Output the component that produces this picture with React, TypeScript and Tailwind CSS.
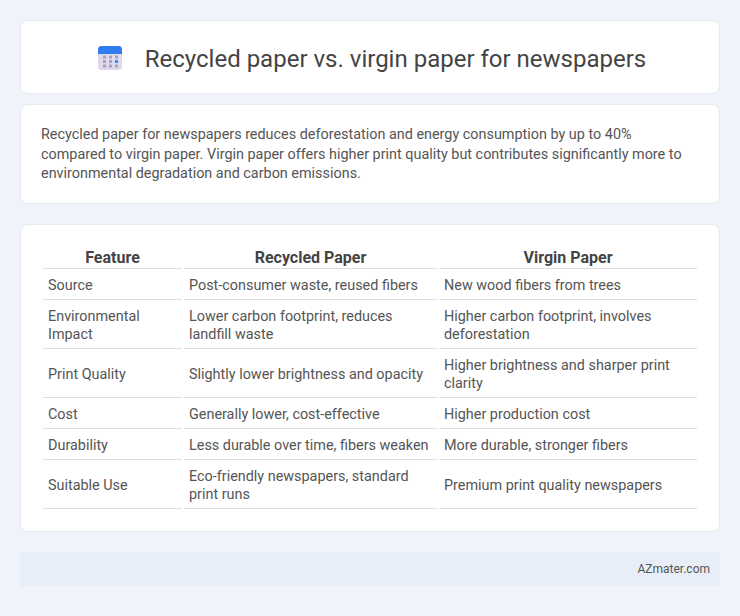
const rows = [
  ['Source', 'Post-consumer waste, reused fibers', 'New wood fibers from trees'],
  ['Environmental Impact', 'Lower carbon footprint, reduces landfill waste', 'Higher carbon footprint, involves deforestation'],
  ['Print Quality', 'Slightly lower brightness and opacity', 'Higher brightness and sharper print clarity'],
  ['Cost', 'Generally lower, cost-effective', 'Higher production cost'],
  ['Durability', 'Less durable over time, fibers weaken', 'More durable, stronger fibers'],
  ['Suitable Use', 'Eco-friendly newspapers, standard print runs', 'Premium print quality newspapers'],
];

function CalendarIcon() {
  return (
    <svg width="24" height="24" viewBox="0 0 24 24" className="mt-[2px] shrink-0">
      <rect x="0" y="0" width="24" height="24" rx="3.5" fill="#e0d8ec" />
      <path d="M0 8V3.500A3.500 3.500 0 0 1 3.500 0h17A3.500 3.500 0 0 1 24 3.500V8Z" fill="#2f7df0" />
      {[5, 11, 17].map((x) =>
        [9.500, 14, 18.500].map((y) => (
          <rect
            key={`${x}-${y}`}
            x={x}
            y={y}
            width="3"
            height="3"
            rx="0.5"
            fill={x === 17 && y === 14 ? '#2f8cf0' : '#a8a2b8'}
          />
        ))
      )}
    </svg>
  );
}

export default function App() {
  return (
    <div className="min-h-[616px] bg-[#f0f3f9] px-5 py-5 font-['Roboto',sans-serif] text-[#444]">
      {/* Title */}
      <div className="flex h-[74px] items-center justify-center rounded-lg border border-[#e6eaf2] bg-white pl-1">
        <CalendarIcon />
        <h1 className="mt-1 ml-[23px] text-2xl leading-8 font-normal">Recycled paper vs. virgin paper for newspapers</h1>
      </div>

      {/* Summary */}
      <div className="mt-[10px] h-[100px] rounded-lg border border-[#e6eaf2] bg-white px-5 py-5">
        <p className="text-[14.4px] leading-[19.5px] text-[#555]">
          Recycled paper for newspapers reduces deforestation and energy consumption by up to 40% compared to virgin paper. Virgin paper offers higher print quality but contributes significantly more to environmental degradation and carbon emissions.
        </p>
      </div>

      {/* Comparison table */}
      <div className="mt-5 h-[308px] rounded-lg border border-[#e6eaf2] bg-white px-5 pt-5">
        <table className="w-full table-fixed border-separate border-spacing-[2px] text-[14.4px] leading-[18px] text-[#555]">
          <colgroup>
            <col className="w-[139px]" />
            <col className="w-[253px]" />
            <col />
          </colgroup>
          <thead>
            <tr>
              <th className="border-b border-[#ddd] pt-px text-[16px] leading-[20px] font-bold text-[#444]">Feature</th>
              <th className="border-b border-[#ddd] pt-px text-[16px] leading-[20px] font-bold text-[#444]">Recycled Paper</th>
              <th className="border-b border-[#ddd] pt-px text-[16px] leading-[20px] font-bold text-[#444]">Virgin Paper</th>
            </tr>
          </thead>
          <tbody>
            {rows.map((row) => (
              <tr key={row[0]}>
                {row.map((cell) => (
                  <td key={cell} className="border-b border-[#ddd] px-[5px] pt-[6px] pb-1 align-middle">{cell}</td>
                ))}
              </tr>
            ))}
          </tbody>
        </table>
      </div>

      {/* Footer */}
      <div className="mt-[20px] flex h-[34px] items-center justify-end bg-[#e8eef8] px-[10px] text-[12px] text-[#555]">
        AZmater.com
      </div>
    </div>
  );
}
